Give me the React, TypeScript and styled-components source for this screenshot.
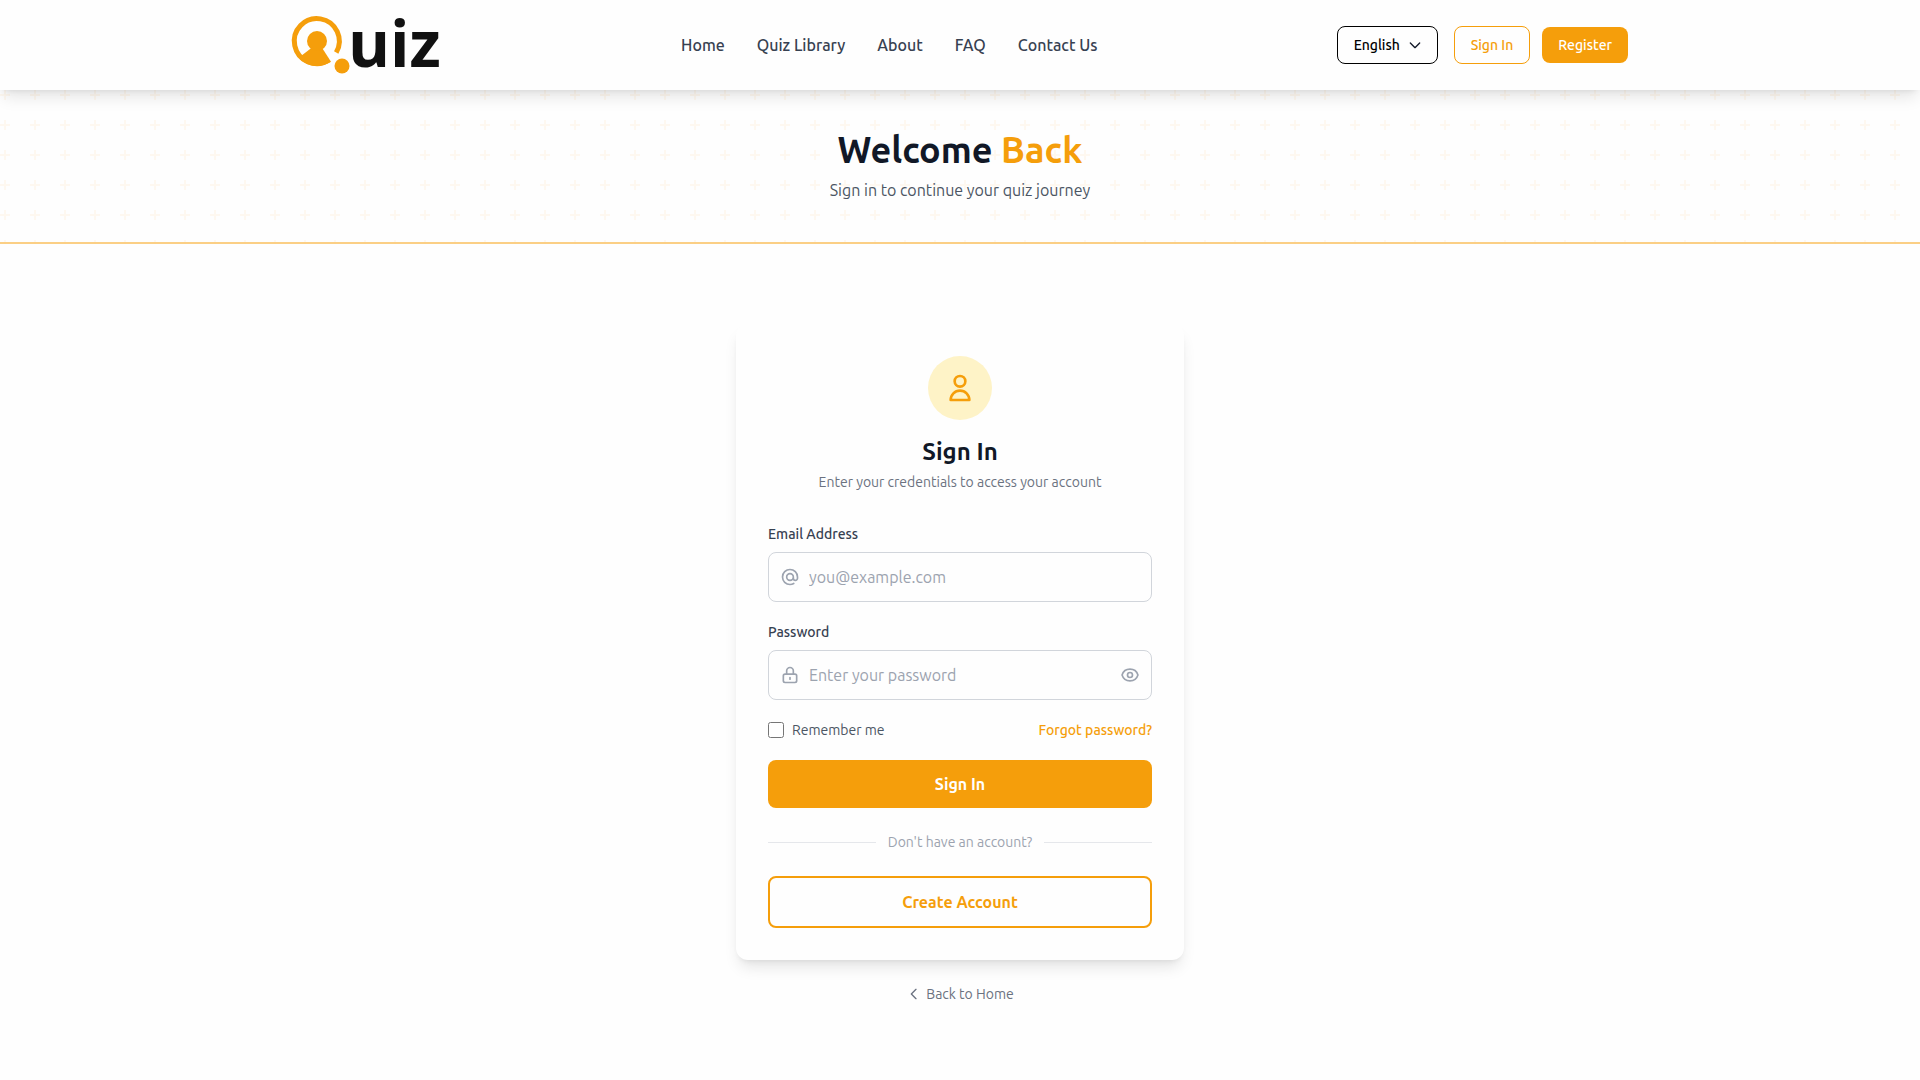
import React, { useState } from "react";
import styled, { createGlobalStyle, css } from "styled-components";

const amber = "#f59e0b";

const GlobalStyle = createGlobalStyle`
  *, *::before, *::after { box-sizing: border-box; }
  body {
    margin: 0;
    background: #fefefe;
    color: #111827;
    font-family: Ubuntu, "Open Sans", "Noto Sans", sans-serif;
    font-size: 16px;
    line-height: 24px;
  }
  h1, h2, p { margin: 0; }
  a { text-decoration: none; }
  button, input, select { font-family: inherit; }
`;

const Header = styled.header`
  position: relative;
  z-index: 1;
  background: #fefefe;
  box-shadow: 0 10px 15px -3px rgba(0, 0, 0, 0.1), 0 4px 6px -4px rgba(0, 0, 0, 0.1);
`;

const HeaderInner = styled.div`
  display: flex;
  align-items: center;
  justify-content: space-between;
  max-width: 1400px;
  min-height: 90px;
  margin: 0 auto;
  padding: 0 32px;
`;

const LogoLink = styled.a`
  display: block;
  line-height: 0;
`;

const LogoArt = styled.svg`
  overflow: visible;
`;

const LogoWord = styled.text`
  font-family: "Open Sans", "Noto Sans", sans-serif;
  font-size: 64px;
  font-weight: 700;
  fill: #111;
`;

const Nav = styled.nav`
  display: flex;
  gap: 32px;
`;

const NavLink = styled.a`
  color: #374151;
  font-weight: 500;
`;

const Actions = styled.div`
  display: flex;
  align-items: center;
  gap: 12px;
`;

const LanguageBox = styled.div`
  display: grid;
  align-items: center;
  margin-right: 4px;
  > * { grid-area: 1 / 1; }
  > svg {
    justify-self: end;
    margin-right: 15px;
    pointer-events: none;
  }
`;

const LanguageSelect = styled.select`
  appearance: none;
  width: 101px;
  height: 38px;
  padding: 0 32px 0 16px;
  border: 1px solid #000;
  border-radius: 8px;
  background: transparent;
  color: #000;
  font-size: 14px;
  font-weight: 500;
`;

const SmallButton = styled.a<{ $solid?: boolean }>`
  padding: 8px 16px;
  border-radius: 8px;
  font-size: 14px;
  font-weight: 500;
  line-height: 20px;
  text-align: center;
  ${(p) =>
    p.$solid
      ? css`
          background: ${amber};
          color: #fff;
        `
      : css`
          border: 1px solid ${amber};
          color: ${amber};
        `}
`;

const plusTile = encodeURIComponent(
  `<svg xmlns="http://www.w3.org/2000/svg" width="30" height="30"><path fill="#f59e0b" fill-opacity="0.06" d="M6 4V0H4v4H0v2h4v4h2V6h4V4H6z"/></svg>`
);

const Hero = styled.section`
  padding: 40px 16px;
  border-bottom: 2px solid #fbcf85;
  background: url("data:image/svg+xml,${plusTile}");
  text-align: center;
`;

const HeroTitle = styled.h1`
  margin-bottom: 8px;
  font-size: 36px;
  font-weight: 600;
  line-height: 40px;
  span { color: ${amber}; }
`;

const HeroText = styled.p`
  color: #4b5563;
`;

const Main = styled.main`
  display: flex;
  flex-direction: column;
  align-items: center;
  gap: 24px;
  padding: 80px 16px 76px;
`;

const Card = styled.section`
  width: 100%;
  max-width: 448px;
  padding: 32px;
  border-radius: 12px;
  background: #fefefe;
  box-shadow: 0 10px 15px -3px rgba(0, 0, 0, 0.1), 0 4px 6px -4px rgba(0, 0, 0, 0.1);
`;

const CardHead = styled.div`
  display: flex;
  flex-direction: column;
  align-items: center;
  margin-bottom: 32px;
  text-align: center;
`;

const Avatar = styled.div`
  display: grid;
  place-items: center;
  width: 64px;
  height: 64px;
  margin-bottom: 16px;
  border-radius: 50%;
  background: #fef3c7;
  color: ${amber};
`;

const CardTitle = styled.h2`
  margin-bottom: 4px;
  font-size: 24px;
  font-weight: 600;
  line-height: 32px;
`;

const CardText = styled.p`
  color: #6b7280;
  font-size: 14px;
  line-height: 20px;
`;

const Form = styled.form`
  display: flex;
  flex-direction: column;
  gap: 20px;
`;

const Field = styled.div`
  display: flex;
  flex-direction: column;
  gap: 8px;
`;

const Label = styled.label`
  color: #374151;
  font-size: 14px;
  font-weight: 500;
  line-height: 20px;
`;

const InputBox = styled.div`
  display: flex;
  align-items: center;
  gap: 9px;
  height: 50px;
  padding: 0 11px;
  border: 1px solid #d1d5db;
  border-radius: 8px;
  color: #9ca3af;
  &:focus-within { border-color: ${amber}; }
`;

const Input = styled.input`
  flex: 1;
  min-width: 0;
  padding: 0;
  border: 0;
  outline: 0;
  background: transparent;
  color: #111827;
  font-size: 16px;
  line-height: 24px;
  &::placeholder { color: #9ca3af; opacity: 1; }
`;

const IconButton = styled.button`
  display: flex;
  padding: 0;
  border: 0;
  background: none;
  color: inherit;
  cursor: pointer;
`;

const Row = styled.div`
  display: flex;
  align-items: center;
  justify-content: space-between;
  font-size: 14px;
  line-height: 20px;
`;

const Remember = styled.label`
  display: flex;
  align-items: center;
  gap: 8px;
  color: #4b5563;
`;

const Checkbox = styled.input`
  width: 16px;
  height: 16px;
  margin: 0;
  accent-color: ${amber};
`;

const AmberLink = styled.a`
  color: ${amber};
  font-weight: 500;
`;

const wide = css`
  display: block;
  width: 100%;
  padding: 12px 16px;
  border-radius: 8px;
  font-size: 16px;
  font-weight: 600;
  line-height: 24px;
  text-align: center;
`;

const Submit = styled.button`
  ${wide}
  border: 0;
  background: ${amber};
  color: #fff;
  cursor: pointer;
`;

const CreateLink = styled.a`
  ${wide}
  border: 2px solid ${amber};
  color: ${amber};
`;

const Divider = styled.div`
  display: flex;
  align-items: center;
  gap: 12px;
  margin: 24px 0;
  color: #9ca3af;
  font-size: 14px;
  line-height: 20px;
  &::before, &::after {
    content: "";
    flex: 1;
    height: 1px;
    background: #e5e7eb;
  }
`;

const BackLink = styled.a`
  display: flex;
  align-items: center;
  gap: 4px;
  color: #6b7280;
  font-size: 14px;
  line-height: 20px;
`;

function Icon({ size, paths }: { size: number; paths: string[] }) {
  return (
    <svg width={size} height={size} viewBox="0 0 24 24" fill="none" stroke="currentColor"
      strokeWidth="2" strokeLinecap="round" strokeLinejoin="round" aria-hidden="true">
      {paths.map((d) => <path key={d} d={d} />)}
    </svg>
  );
}

const icons = {
  user: ["M16 7a4 4 0 11-8 0 4 4 0 018 0z", "M12 14a7 7 0 00-7 7h14a7 7 0 00-7-7z"],
  at: ["M16 12a4 4 0 10-8 0 4 4 0 008 0zm0 0v1.5a2.5 2.5 0 005 0V12a9 9 0 10-9 9m4.5-1.206a8.959 8.959 0 01-4.5 1.207"],
  lock: ["M12 15v2m-6 4h12a2 2 0 002-2v-6a2 2 0 00-2-2H6a2 2 0 00-2 2v6a2 2 0 002 2zm10-10V7a4 4 0 00-8 0v4h8z"],
  eye: [
    "M15 12a3 3 0 11-6 0 3 3 0 016 0z",
    "M2.458 12C3.732 7.943 7.523 5 12 5c4.478 0 8.268 2.943 9.542 7-1.274 4.057-5.064 7-9.542 7-4.477 0-8.268-2.943-9.542-7z",
  ],
  down: ["M19 9l-7 7-7-7"],
  left: ["M15 19l-7-7 7-7"],
};

function Logo() {
  return (
    <LogoArt width="150" height="90" viewBox="0 -15 150 90" role="img" aria-label="Quiz">
      <path d="M44.2 37.5A22.5 22.5 0 1 0 37 45" fill="none" stroke={amber} strokeWidth="5" />
      <path d="M9 41L20 32.500L30.500 33.500L39 46.700A25 25 0 0 1 8 44.300Z" fill={amber} />
      <circle cx="25" cy="26" r="10" fill={amber} />
      <circle cx="50" cy="51" r="7.500" fill={amber} />
      <LogoWord x="56" y="52">uiz</LogoWord>
    </LogoArt>
  );
}

const navItems = ["Home", "Quiz Library", "About", "FAQ", "Contact Us"];

export default function App() {
  const [visible, setVisible] = useState(false);
  return (
    <>
      <GlobalStyle />
      <Header>
        <HeaderInner>
          <LogoLink href="#"><Logo /></LogoLink>
          <Nav>
            {navItems.map((item) => <NavLink key={item} href="#">{item}</NavLink>)}
          </Nav>
          <Actions>
            <LanguageBox>
              <LanguageSelect aria-label="Language">
                <option>English</option>
              </LanguageSelect>
              <Icon size={16} paths={icons.down} />
            </LanguageBox>
            <SmallButton href="#">Sign In</SmallButton>
            <SmallButton href="#" $solid>Register</SmallButton>
          </Actions>
        </HeaderInner>
      </Header>
      <Hero>
        <HeroTitle>Welcome <span>Back</span></HeroTitle>
        <HeroText>Sign in to continue your quiz journey</HeroText>
      </Hero>
      <Main>
        <Card>
          <CardHead>
            <Avatar><Icon size={32} paths={icons.user} /></Avatar>
            <CardTitle>Sign In</CardTitle>
            <CardText>Enter your credentials to access your account</CardText>
          </CardHead>
          <Form onSubmit={(e) => e.preventDefault()}>
            <Field>
              <Label htmlFor="email">Email Address</Label>
              <InputBox>
                <Icon size={20} paths={icons.at} />
                <Input id="email" type="email" placeholder="you@example.com" />
              </InputBox>
            </Field>
            <Field>
              <Label htmlFor="password">Password</Label>
              <InputBox>
                <Icon size={20} paths={icons.lock} />
                <Input id="password" type={visible ? "text" : "password"} placeholder="Enter your password" />
                <IconButton type="button" aria-label="Show password" onClick={() => setVisible(!visible)}>
                  <Icon size={20} paths={icons.eye} />
                </IconButton>
              </InputBox>
            </Field>
            <Row>
              <Remember><Checkbox type="checkbox" />Remember me</Remember>
              <AmberLink href="#">Forgot password?</AmberLink>
            </Row>
            <Submit type="submit">Sign In</Submit>
          </Form>
          <Divider>Don't have an account?</Divider>
          <CreateLink href="#">Create Account</CreateLink>
        </Card>
        <BackLink href="#"><Icon size={16} paths={icons.left} />Back to Home</BackLink>
      </Main>
    </>
  );
}
